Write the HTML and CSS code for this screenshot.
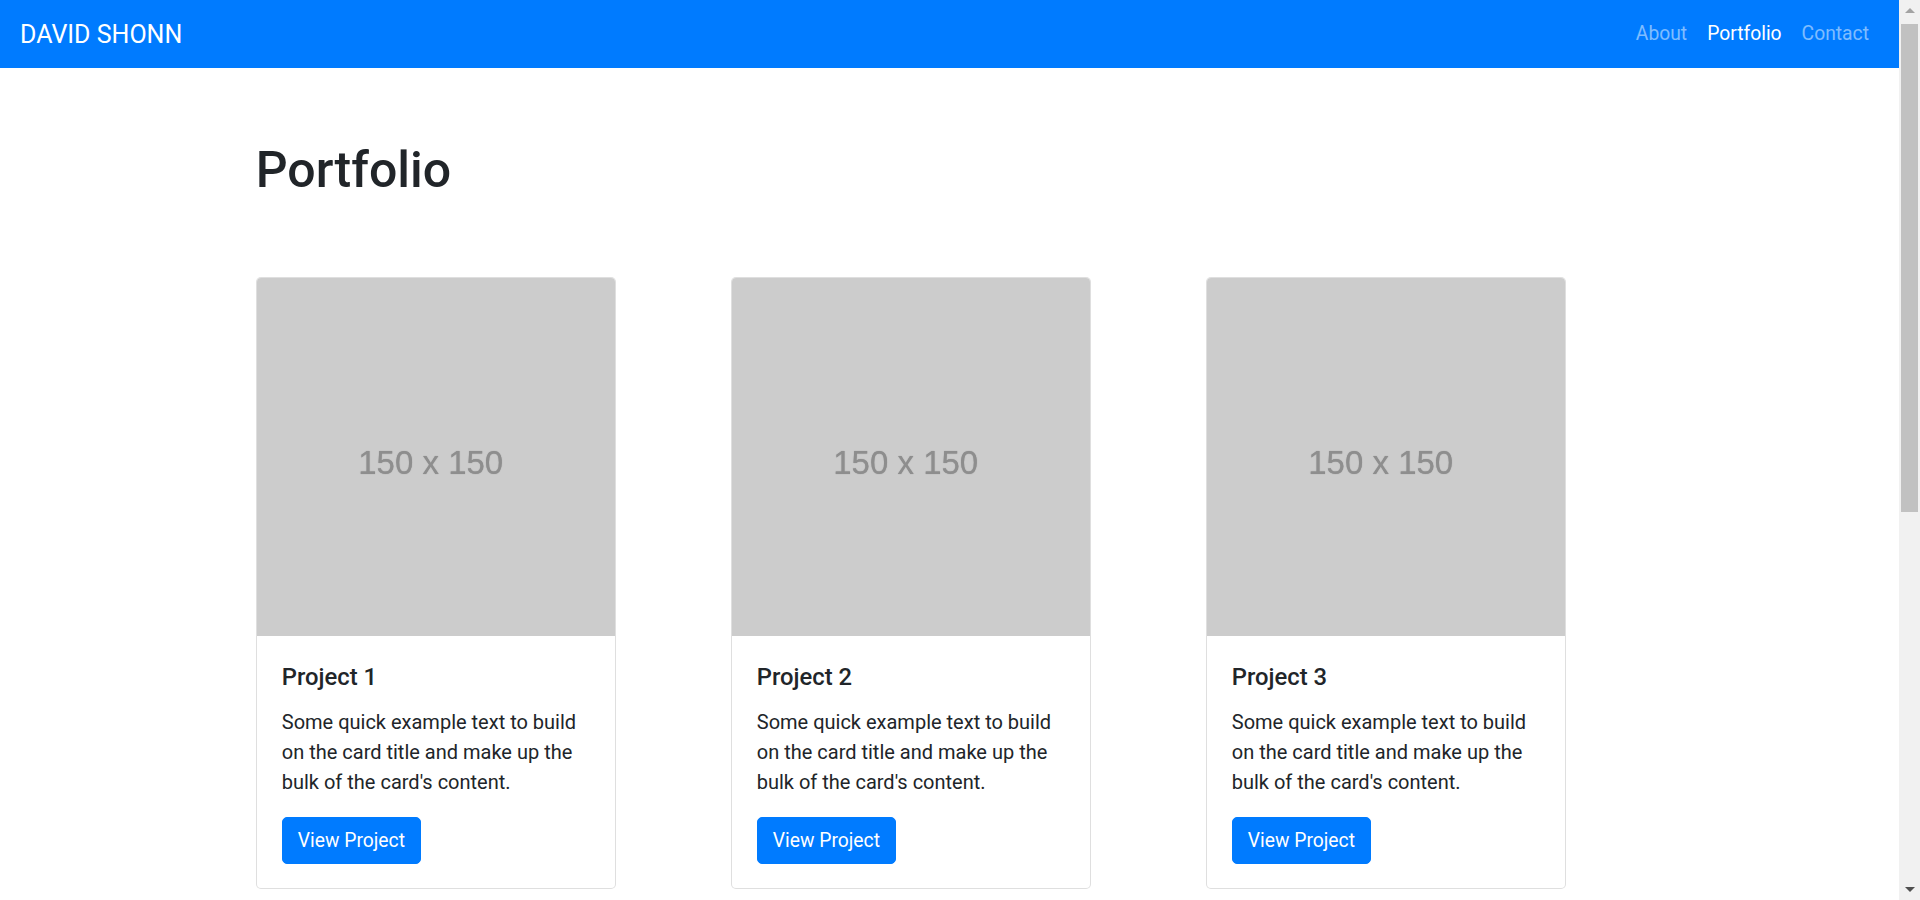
FILE: index.html
```html
<!DOCTYPE html>
<html lang="en">
<head>
<meta charset="utf-8">
<title>David Shonn - Portfolio</title>
<link rel="stylesheet" href="styles.css">
</head>
<body>
<div class="page">
  <nav class="navbar">
    <a class="brand" href="#">DAVID SHONN</a>
    <ul class="nav">
      <li><a class="nav-link" href="#">About</a></li>
      <li><a class="nav-link active" href="#">Portfolio</a></li>
      <li><a class="nav-link" href="#">Contact</a></li>
    </ul>
  </nav>
  <main class="container">
    <h1 class="title">Portfolio</h1>
    <div class="row">
      <div class="col">
        <div class="card">
          <div class="card-img"><span>150 x 150</span></div>
          <div class="card-body">
            <h5 class="card-title">Project 1</h5>
            <p class="card-text">Some quick example text to build on the card title and make up the bulk of the card's content.</p>
            <a href="#" class="btn">View Project</a>
          </div>
        </div>
      </div>
      <div class="col">
        <div class="card">
          <div class="card-img"><span>150 x 150</span></div>
          <div class="card-body">
            <h5 class="card-title">Project 2</h5>
            <p class="card-text">Some quick example text to build on the card title and make up the bulk of the card's content.</p>
            <a href="#" class="btn">View Project</a>
          </div>
        </div>
      </div>
      <div class="col">
        <div class="card">
          <div class="card-img"><span>150 x 150</span></div>
          <div class="card-body">
            <h5 class="card-title">Project 3</h5>
            <p class="card-text">Some quick example text to build on the card title and make up the bulk of the card's content.</p>
            <a href="#" class="btn">View Project</a>
          </div>
        </div>
      </div>
    </div>
  </main>
</div>
<div class="scrollbar">
  <div class="sb-btn"><span class="arrow-up"></span></div>
  <div class="sb-track"><div class="sb-thumb"></div></div>
  <div class="sb-btn"><span class="arrow-down"></span></div>
</div>
</body>
</html>
```
FILE: styles.css
```css
* { box-sizing: border-box; }
html, body { margin: 0; padding: 0; height: 900px; overflow: hidden; }
body {
  display: flex;
  font-family: Roboto, "Liberation Sans", sans-serif;
  font-size: 20px;
  line-height: 1.5;
  color: #212529;
  background: #fff;
}
.page { flex: 1; height: 900px; overflow: hidden; }

.navbar {
  height: 68px;
  background: #007bff;
  display: flex;
  align-items: center;
  justify-content: space-between;
  padding: 0 20px;
}
.brand {
  color: #fff;
  text-decoration: none;
  font-size: 25px;
  line-height: 37px;
}
.nav { list-style: none; margin: 0; padding: 0; display: flex; }
.nav-link {
  display: block;
  padding: 0 10px;
  font-size: 19.3px;
  line-height: 30px;
  color: rgba(255,255,255,.5);
  text-decoration: none;
}
.nav-link.active { color: #fff; }

.container {
  width: 1425px;
  margin: 0 auto;
  padding: 0 18.75px;
}
.title {
  margin: 72px 0 77px;
  font-size: 50px;
  font-weight: 500;
  line-height: 60px;
}
.row {
  display: grid;
  grid-template-columns: repeat(3, 1fr);
  column-gap: 37.5px;
}
.card {
  width: 360px;
  border: 1px solid rgba(0,0,0,.125);
  border-radius: 5px;
  overflow: hidden;
  background: #fff;
}
.card-img {
  height: 358px;
  background: #cccccc;
  display: flex;
  align-items: center;
  justify-content: center;
  padding: 10px 10px 0 0;
}
.card-img span {
  font-family: "Liberation Sans", Arial, sans-serif;
  font-size: 33px;
  color: #8e8e8e;
  filter: blur(0.6px);
  text-shadow: 0 0 1px #8e8e8e;
  line-height: 1;
}
.card-body { padding: 26px 25px 24px; }
.card-title {
  margin: 0 0 15px;
  font-size: 23.8px;
  font-weight: 500;
  line-height: 30px;
}
.card-text { margin: 0 0 20px; line-height: 30px; }
.btn {
  display: inline-block;
  padding: 7.5px 15px;
  border: 1px solid #007bff;
  border-radius: 5px;
  background: #007bff;
  color: #fff;
  font-size: 19.3px;
  line-height: 30px;
  text-decoration: none;
}

.scrollbar {
  width: 21px;
  height: 900px;
  background: #f1f1f1;
  display: flex;
  flex-direction: column;
}
.sb-btn {
  height: 21px;
  display: flex;
  align-items: center;
  justify-content: center;
}
.arrow-up, .arrow-down {
  width: 0; height: 0;
  border-left: 5px solid transparent;
  border-right: 5px solid transparent;
}
.arrow-up { border-bottom: 5px solid #a3a3a3; }
.arrow-down { border-top: 5px solid #505050; }
.sb-track { flex: 1; padding: 3px 2px 0; }
.sb-thumb { height: 488px; background: #c1c1c1; }
```
